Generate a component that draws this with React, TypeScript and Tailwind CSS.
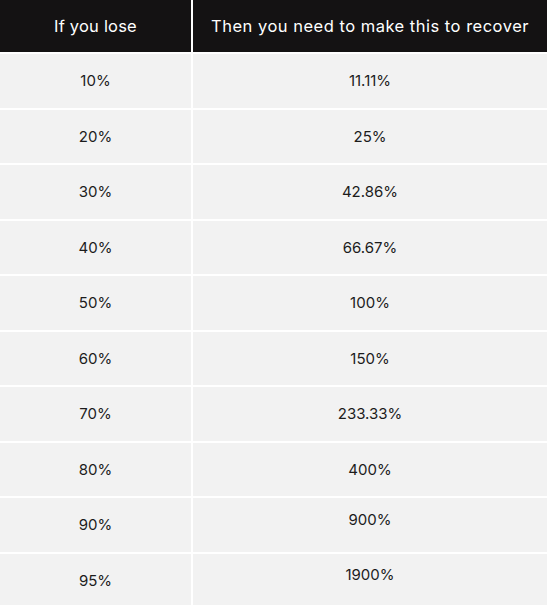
import React from "react";

const rows: [string, string, boolean][] = [
  ["10%", "11.11%", false],
  ["20%", "25%", false],
  ["30%", "42.86%", false],
  ["40%", "66.67%", false],
  ["50%", "100%", false],
  ["60%", "150%", false],
  ["70%", "233.33%", false],
  ["80%", "400%", false],
  ["90%", "900%", true],
  ["95%", "1900%", true],
];

export default function App() {
  return (
    <div
      className="w-[547px] h-[605px] bg-white overflow-hidden"
      style={{ fontFamily: "Inter, 'Open Sans', sans-serif" }}
    >
      <div className="grid grid-cols-[191px_354px] gap-x-[2px] gap-y-[2px] bg-white">
        <div className="h-[52px] bg-[#141213] text-white text-[16.5px] tracking-[0.2px] flex items-center justify-center">
          If you lose
        </div>
        <div className="h-[52px] bg-[#141213] text-white text-[16.5px] tracking-[0.5px] flex items-center justify-center">
          Then you need to make this to recover
        </div>
        {rows.map(([a, b, up]) => (
          <React.Fragment key={a}>
            <div className="h-[53.55px] pt-[1px] bg-[#f2f2f2] text-[#1c1c1c] text-[15px] flex items-center justify-center">
              {a}
            </div>
            <div
              className={
                "h-[53.55px] bg-[#f2f2f2] text-[#1c1c1c] text-[15px] flex items-center justify-center " +
                (up ? "pb-[10px]" : "pt-[1px]")
              }
            >
              {b}
            </div>
          </React.Fragment>
        ))}
      </div>
    </div>
  );
}
